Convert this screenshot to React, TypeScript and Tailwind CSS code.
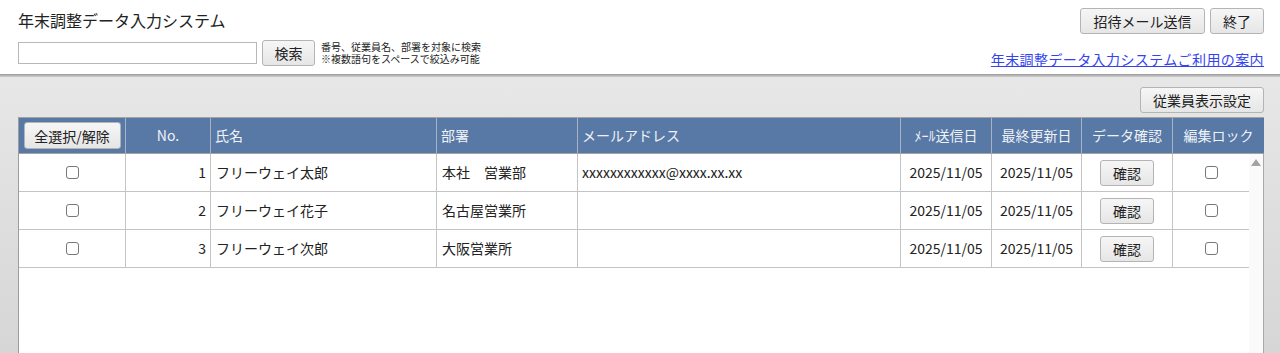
import React from "react";

const rows = [
  { no: 1, name: "フリーウェイ太郎", dept: "本社　営業部", mail: "xxxxxxxxxxxx@xxxx.xx.xx" },
  { no: 2, name: "フリーウェイ花子", dept: "名古屋営業所", mail: "" },
  { no: 3, name: "フリーウェイ次郎", dept: "大阪営業所", mail: "" },
];

const font = { fontFamily: '"Noto Sans CJK JP", "Noto Sans", sans-serif' };

const Btn = ({ children, className = "" }: { children: React.ReactNode; className?: string }) => (
  <button
    className={
      "rounded-[3px] border border-[#b4b4b4] bg-gradient-to-b from-[#f6f6f6] to-[#e6e6e6] text-[14px] text-[#222] leading-none " +
      className
    }
  >
    {children}
  </button>
);

const Check = () => (
  <span className="inline-block h-[13px] w-[13px] rounded-[3px] border border-[#777] bg-white" />
);

const headCols = "grid grid-cols-[106px_85px_226px_141px_323px_91px_90px_91px_92px]";
const bodyCols = "grid grid-cols-[106px_85px_226px_141px_323px_91px_90px_91px_77px]";

export default function App() {
  return (
    <div style={font} className="flex h-[353px] flex-col overflow-hidden bg-gradient-to-b from-[#ececec] to-[#d6d6d6] text-[#222]">
      {/* header */}
      <div className="flex h-[74px] shrink-0 justify-between bg-white pl-[18px] pr-[16px]">
        <div className="flex flex-col">
          <div className="mt-[9px] text-[16px] leading-[22px] text-[#222]">年末調整データ入力システム</div>
          <div className="mt-[9px] flex items-center">
            <input className="h-[22px] w-[239px] border border-[#b8b8b8] bg-white outline-none" />
            <Btn className="ml-[5px] h-[26px] w-[53px]">検索</Btn>
            <div className="ml-[6px] text-[10px] leading-[12px] text-[#222]">
              <div>番号、従業員名、部署を対象に検索</div>
              <div>※複数語句をスペースで絞込み可能</div>
            </div>
          </div>
        </div>
        <div className="flex flex-col items-end">
          <div className="mt-[8px] flex gap-[5px]">
            <Btn className="h-[26px] w-[125px]">招待メール送信</Btn>
            <Btn className="h-[26px] w-[54px]">終了</Btn>
          </div>
          <a className="mt-[16px] text-[14px] leading-[18px] tracking-[0.4px] text-[#3344ee] underline">
            年末調整データ入力システムご利用の案内
          </a>
        </div>
      </div>
      <div className="h-[3px] shrink-0 bg-gradient-to-b from-[#9a9a9a] to-[#d0d0d0]" />

      {/* body */}
      <div className="flex flex-1 flex-col pl-[18px] pr-[16px]">
        <div className="mt-[10px] flex justify-end">
          <Btn className="h-[26px] w-[124px]">従業員表示設定</Btn>
        </div>
        <div className="mt-[4px] flex flex-1 flex-col border-l border-[#9c9c9c]">
          <div className={headCols + " h-[37px] border-t border-b border-[#a3a3a3] bg-[#5878a5] text-[14px] text-[#eef2f7]"}>
            <div className="flex items-center justify-center">
              <Btn className="h-[27px] w-[97px]">全選択/解除</Btn>
            </div>
            <div className="flex items-center justify-center border-l border-[#a7b3c3]">No.</div>
            <div className="flex items-center border-l border-[#a7b3c3] pl-[4px]">氏名</div>
            <div className="flex items-center border-l border-[#a7b3c3] pl-[4px]">部署</div>
            <div className="flex items-center border-l border-[#a7b3c3] pl-[4px]">メールアドレス</div>
            <div className="flex items-center justify-center border-l border-[#a7b3c3]">ﾒｰﾙ送信日</div>
            <div className="flex items-center justify-center border-l border-[#a7b3c3]">最終更新日</div>
            <div className="flex items-center justify-center border-l border-[#a7b3c3]">データ確認</div>
            <div className="flex items-center justify-center border-l border-[#a7b3c3]">編集ロック</div>
          </div>
          <div className="flex flex-1 bg-white">
            <div className="flex flex-col">
              {rows.map((r) => (
                <div key={r.no} className={bodyCols + " h-[38px] border-b border-[#c4c4c4] text-[14px]"}>
                  <div className="flex items-center justify-center">
                    <Check />
                  </div>
                  <div className="flex items-center justify-end border-l border-[#c4c4c4] pr-[4px]">{r.no}</div>
                  <div className="flex items-center border-l border-[#c4c4c4] pl-[5px]">{r.name}</div>
                  <div className="flex items-center border-l border-[#c4c4c4] pl-[5px]">{r.dept}</div>
                  <div className="flex items-center border-l border-[#c4c4c4] pl-[4px]">{r.mail}</div>
                  <div className="flex items-center justify-center border-l border-[#c4c4c4]">2025/11/05</div>
                  <div className="flex items-center justify-center border-l border-[#c4c4c4]">2025/11/05</div>
                  <div className="flex items-center justify-center border-l border-[#c4c4c4]">
                    <Btn className="h-[26px] w-[54px]">確認</Btn>
                  </div>
                  <div className="flex items-center justify-center border-l border-[#c4c4c4]">
                    <Check />
                  </div>
                </div>
              ))}
            </div>
            <div className="flex w-[15px] justify-center bg-[#fafafa] pt-[5px]">
              <span className="h-0 w-0 border-b-[7px] border-l-[5px] border-r-[5px] border-b-[#a3a3a3] border-l-transparent border-r-transparent" />
            </div>
            <div className="w-px bg-[#a8a8a8]" />
          </div>
        </div>
      </div>
    </div>
  );
}
